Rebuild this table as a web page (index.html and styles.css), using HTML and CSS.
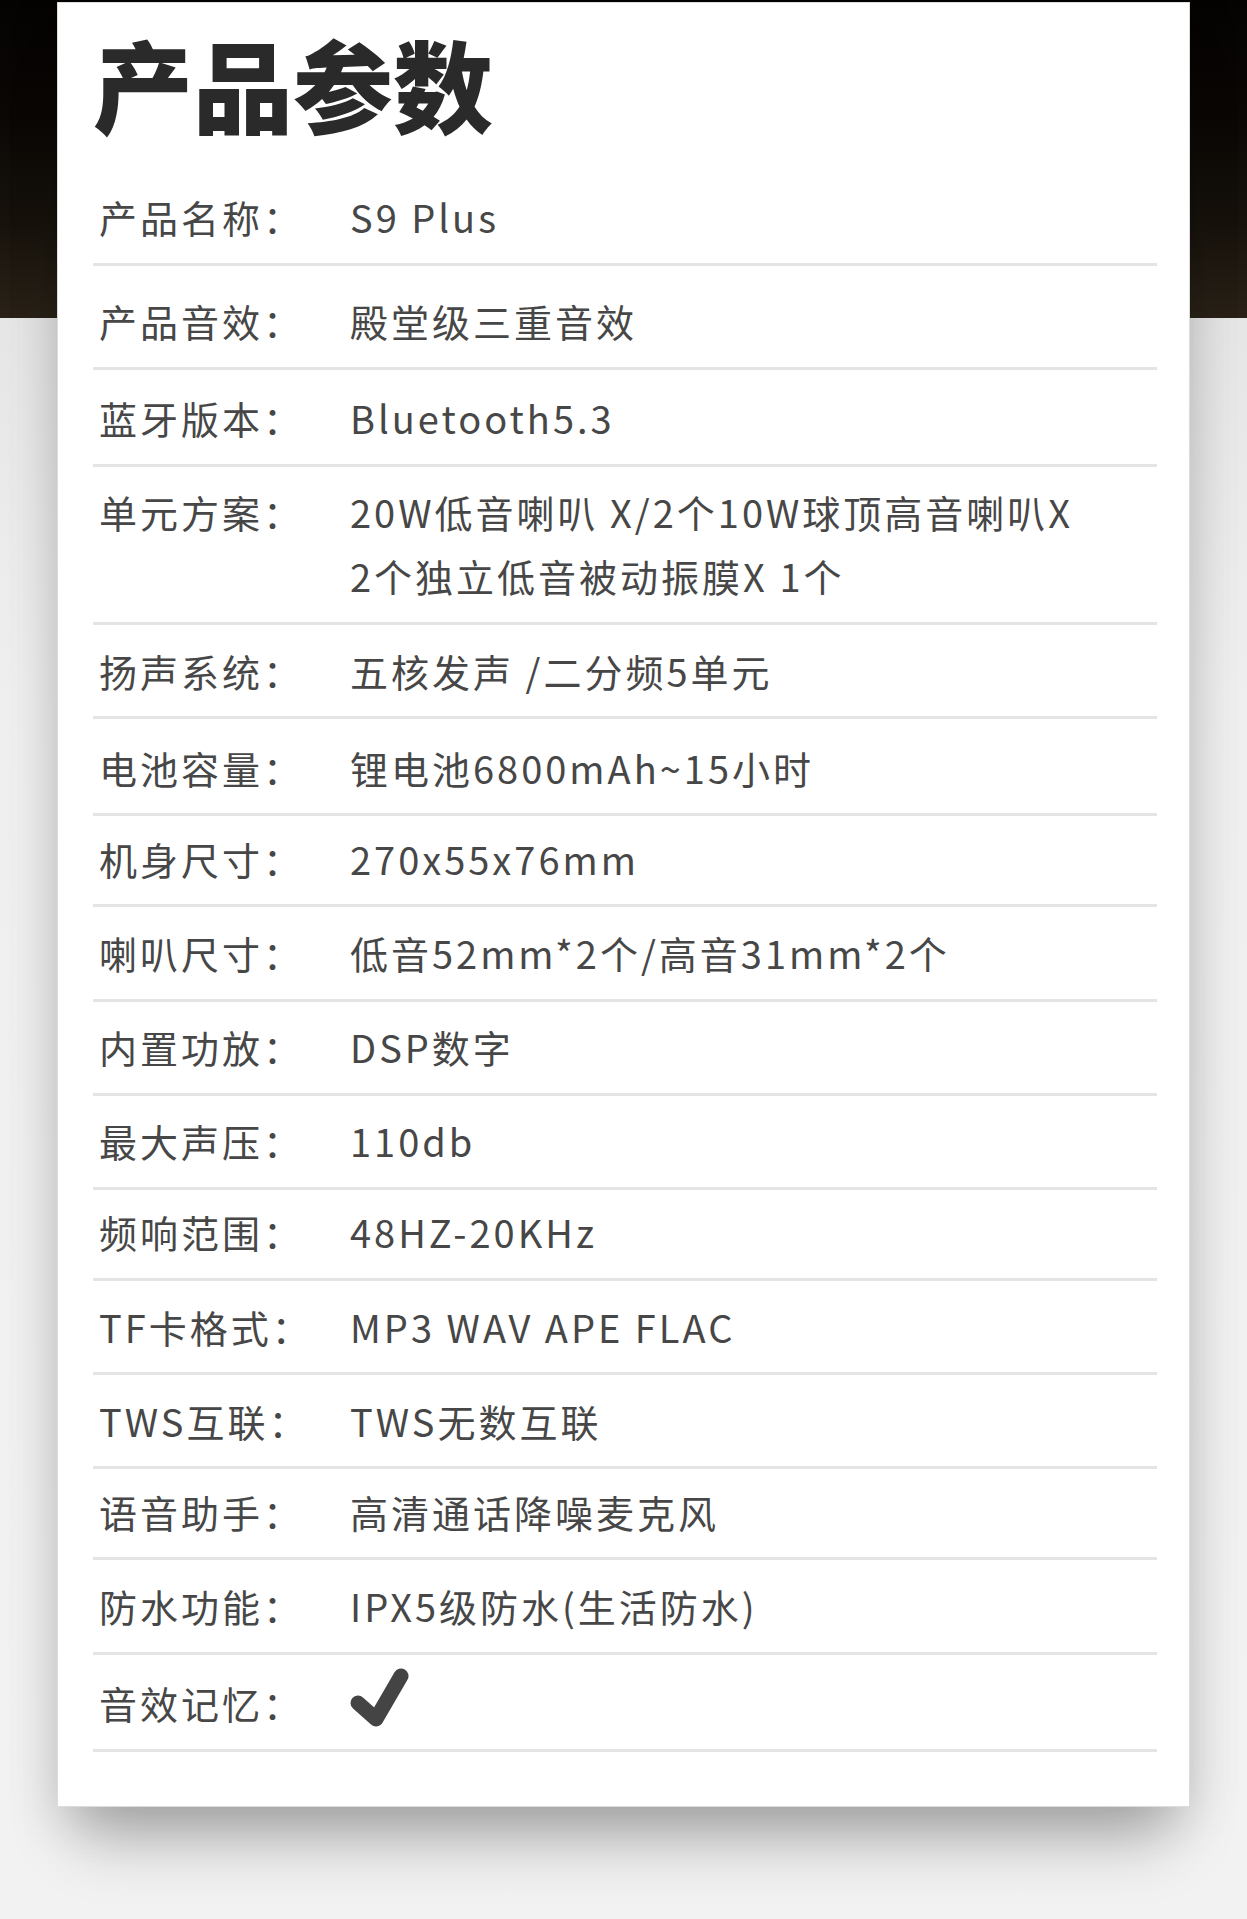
FILE: index.html
```html
<!DOCTYPE html>
<html lang="zh-CN">
<head>
<meta charset="utf-8">
<title>产品参数</title>
<link rel="stylesheet" href="styles.css">
</head>
<body>
<div class="page">
  <section class="card">
    <h1 class="title">产品参数</h1>
    <dl class="specs">
      <div class="row"><dt class="label">产品名称：</dt><dd class="value">S9 Plus</dd></div>
      <div class="row row--loose"><dt class="label">产品音效：</dt><dd class="value">殿堂级三重音效</dd></div>
      <div class="row row--plus"><dt class="label">蓝牙版本：</dt><dd class="value">Bluetooth5.3</dd></div>
      <div class="row"><dt class="label">单元方案：</dt><dd class="value">20W低音喇叭 X/2个10W球顶高音喇叭X<br>2个独立低音被动振膜X 1个</dd></div>
      <div class="row"><dt class="label">扬声系统：</dt><dd class="value">五核发声 /二分频5单元</dd></div>
      <div class="row row--plus"><dt class="label">电池容量：</dt><dd class="value">锂电池6800mAh~15小时</dd></div>
      <div class="row row--tight"><dt class="label">机身尺寸：</dt><dd class="value">270x55x76mm</dd></div>
      <div class="row"><dt class="label">喇叭尺寸：</dt><dd class="value">低音52mm*2个/高音31mm*2个</dd></div>
      <div class="row"><dt class="label">内置功放：</dt><dd class="value">DSP数字</dd></div>
      <div class="row"><dt class="label">最大声压：</dt><dd class="value">110db</dd></div>
      <div class="row row--tight"><dt class="label">频响范围：</dt><dd class="value">48HZ-20KHz</dd></div>
      <div class="row"><dt class="label">TF卡格式：</dt><dd class="value">MP3 WAV APE FLAC</dd></div>
      <div class="row"><dt class="label">TWS互联：</dt><dd class="value">TWS无数互联</dd></div>
      <div class="row row--tight"><dt class="label">语音助手：</dt><dd class="value">高清通话降噪麦克风</dd></div>
      <div class="row"><dt class="label">防水功能：</dt><dd class="value">IPX5级防水(生活防水)</dd></div>
      <div class="row row--plus"><dt class="label">音效记忆：</dt><dd class="value value--icon"><svg class="check" width="60" height="60" viewBox="0 0 60 60" aria-label="支持"><polyline points="8,35 26,51 51,8" fill="none" stroke="#444" stroke-width="15" stroke-linecap="round" stroke-linejoin="round"/></svg></dd></div>
    </dl>
  </section>
</div>
</body>
</html>
```

FILE: styles.css
```css
html, body {
  margin: 0;
  padding: 0;
}

body {
  width: 1247px;
  height: 1919px;
  overflow: hidden;
  font-family: "Noto Sans CJK SC", "Noto Sans", sans-serif;
  background:
    linear-gradient(180deg, #050302 0%, #0a0705 35%, #17120c 70%, #2a2218 100%) top left / 100% 318px no-repeat,
    linear-gradient(180deg, #e6e6e6 318px, #efefef 700px, #f2f2f2 100%);
}

.page {
  padding: 2px 57px 0;
}

.card {
  background: #ffffff;
  border: 1px solid #dcdcdc;
  padding: 30.4px 32px 54px 35px;
  box-shadow:
    0 50px 60px -20px rgba(0, 0, 0, 0.28),
    0 10px 50px rgba(0, 0, 0, 0.12);
}

.title {
  margin: 0 0 38px;
  font-size: 100px;
  line-height: 100px;
  font-weight: 900;
  color: #2a2a2a;
  letter-spacing: 0;
}

.specs {
  margin: 0;
}

.row {
  display: flex;
  align-items: flex-start;
  padding: 13.65px 0 13.5px;
  border-bottom: 3px solid #e4e4e4;
  font-size: 38px;
  line-height: 64px;
  letter-spacing: 3px;
  color: #474747;
}

.row--loose {
  padding-top: 23.65px;
}

.row--plus {
  padding-top: 16.65px;
}

.row--tight {
  padding-top: 10.65px;
}

.label {
  flex: 0 0 251px;
  margin-left: 6px;
  font-weight: 400;
}

.value {
  margin: 0;
  font-weight: 400;
}

.value--icon {
  display: flex;
  align-items: center;
  height: 64px;
}

.check {
  display: block;
  margin-top: -10px;
}
```
